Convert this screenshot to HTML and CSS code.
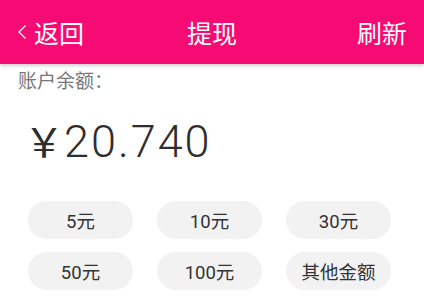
FILE: index.html
```html
<!DOCTYPE html>
<html lang="zh">
<head>
<meta charset="utf-8">
<link rel="stylesheet" href="styles.css">
</head>
<body>
<header class="topbar">
  <div class="back">
    <svg class="chev" width="10" height="16" viewBox="0 0 10 16"><path d="M8.5 1.5 L2 8 L8.5 14.5" fill="none" stroke="#fff" stroke-width="1.3"/></svg>
    <span>返回</span>
  </div>
  <div class="title">提现</div>
  <div class="refresh">刷新</div>
</header>
<main class="content">
  <div class="label">账户余额：</div>
  <div class="amount"><span class="yen">￥</span>20.740</div>
  <div class="options">
    <div class="opt">5元</div>
    <div class="opt">10元</div>
    <div class="opt">30元</div>
    <div class="opt">50元</div>
    <div class="opt">100元</div>
    <div class="opt">其他金额</div>
  </div>
</main>
</body>
</html>
```
FILE: styles.css
```css
html, body {
  margin: 0;
  padding: 0;
  background: #fff;
  font-family: Roboto, "Noto Sans CJK SC", sans-serif;
}
.topbar {
  height: 64px;
  background: #f60a73;
  color: #fff;
  display: flex;
  align-items: center;
  justify-content: space-between;
  padding: 0 17px 0 17px;
  box-shadow: 0 2px 3px rgba(0,0,0,0.18);
  font-size: 25px;
  position: relative;
}
.back {
  display: flex;
  align-items: center;
  gap: 7px;
}
.chev { display: block; }
.title {
  position: absolute;
  left: 0;
  right: 0;
  text-align: center;
  pointer-events: none;
}
.content {
  padding: 6px 0 0 0;
}
.label {
  padding-left: 18px;
  font-size: 19px;
  color: #777;
  line-height: 24px;
}
.amount {
  padding-left: 24px;
  margin-top: 20px;
  font-size: 45px;
  font-weight: 300;
  color: #2e2e2e;
  line-height: 52px;
  letter-spacing: 2px;
}
.yen {
  font-family: "Noto Sans CJK SC", sans-serif;
  font-size: 40px;
  font-weight: 400;
  letter-spacing: 0;
}
.options {
  margin: 33px 0 0 28px;
  display: grid;
  grid-template-columns: repeat(3, 105px);
  column-gap: 24px;
  row-gap: 13px;
}
.opt {
  height: 38px;
  border-radius: 19px;
  background: #f2f2f2;
  color: #333;
  font-size: 18.5px;
  display: flex;
  align-items: center;
  justify-content: center;
}
```
